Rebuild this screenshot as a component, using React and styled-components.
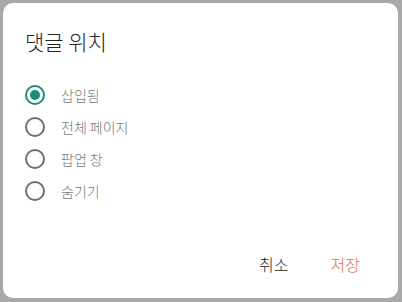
import React, { useState } from "react";
import styled, { createGlobalStyle } from "styled-components";

const GlobalStyle = createGlobalStyle`
  html, body {
    margin: 0;
    padding: 0;
    background: #a9a9a9;
  }
  body {
    font-family: "Noto Sans CJK KR", "Noto Sans", sans-serif;
  }
`;

const Frame = styled.div`
  width: 402px;
  height: 302px;
  box-sizing: border-box;
  padding: 3px 4px 4px 3px;
  background: #a9a9a9;
`;

const Dialog = styled.div`
  height: 100%;
  box-sizing: border-box;
  background: #fff;
  border-radius: 10px;
  display: flex;
  flex-direction: column;
  padding: 24px 22px 18px 22px;
`;

const Title = styled.h2`
  margin: 0;
  font-size: 21px;
  font-weight: 300;
  line-height: 28px;
  color: #222;
`;

const Options = styled.div`
  display: flex;
  flex-direction: column;
  margin-top: 28px;
  gap: 8px;
`;

const Option = styled.label`
  display: flex;
  align-items: center;
  height: 24px;
  cursor: pointer;
`;

const Radio = styled.span`
  width: 20px;
  height: 20px;
  box-sizing: border-box;
  border-radius: 50%;
  border: 2px solid ${(p) => (p.checked ? "#1d8b7b" : "#707070")};
  display: flex;
  align-items: center;
  justify-content: center;
  &::after {
    content: "";
    width: 10px;
    height: 10px;
    border-radius: 50%;
    background: ${(p) => (p.checked ? "#1d8b7b" : "transparent")};
  }
`;

const Label = styled.span`
  margin-left: 16px;
  font-size: 14px;
  font-weight: 300;
  color: #777;
`;

const Actions = styled.div`
  margin-top: auto;
  display: flex;
  justify-content: flex-end;
  gap: 10px;
`;

const Button = styled.button`
  background: none;
  border: none;
  font-family: inherit;
  font-size: 16px;
  font-weight: 300;
  padding: 4px 16px;
  color: ${(p) => (p.primary ? "#d47a5a" : "#222")};
  cursor: pointer;
`;

const options = ["삽입됨", "전체 페이지", "팝업 창", "숨기기"];

export default function App() {
  const [selected, setSelected] = useState(0);
  return (
    <>
      <GlobalStyle />
      <Frame>
        <Dialog>
          <Title>댓글 위치</Title>
          <Options>
            {options.map((o, i) => (
              <Option key={o} onClick={() => setSelected(i)}>
                <Radio checked={selected === i} />
                <Label>{o}</Label>
              </Option>
            ))}
          </Options>
          <Actions>
            <Button>취소</Button>
            <Button primary>저장</Button>
          </Actions>
        </Dialog>
      </Frame>
    </>
  );
}
